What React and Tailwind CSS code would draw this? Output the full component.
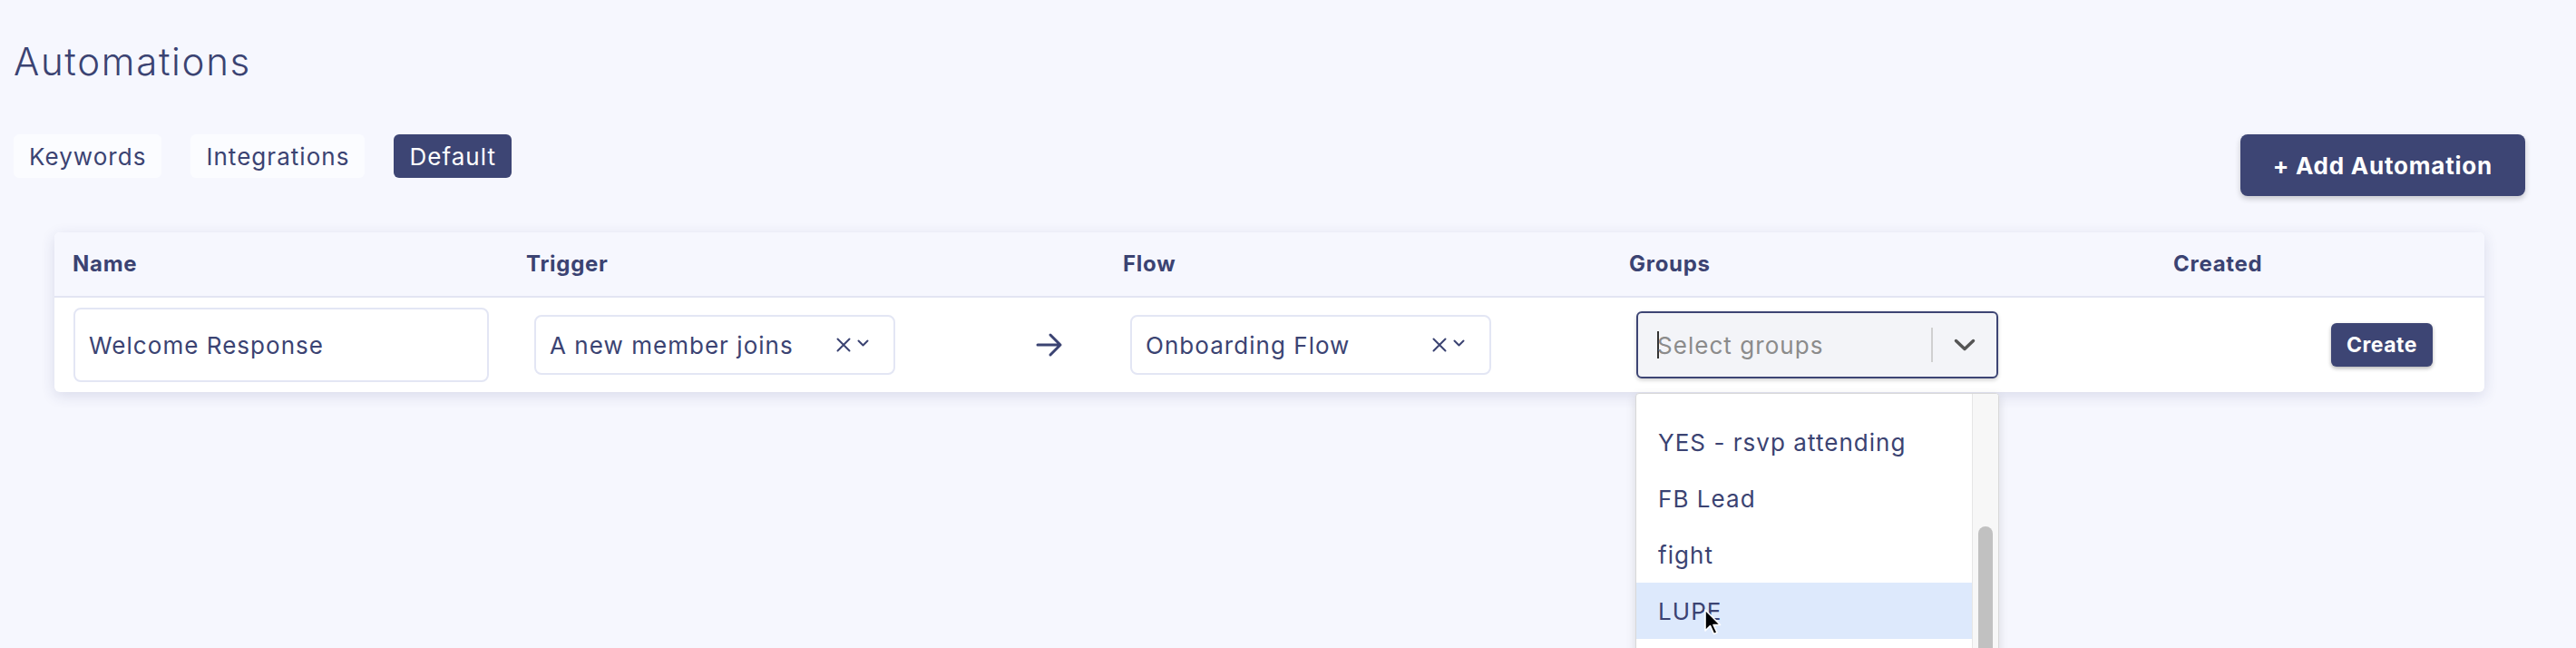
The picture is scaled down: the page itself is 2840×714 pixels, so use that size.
import React from 'react';

const navy = 'text-[#3b4372]';

const SmallX = () => (
  <svg width="16" height="16" viewBox="0 0 16 16" className="shrink-0">
    <path d="M1.5 1.5L14.5 14.5M14.5 1.5L1.5 14.5" stroke="#3b4372" strokeWidth="2" strokeLinecap="round" />
  </svg>
);

const SmallChevron = () => (
  <svg width="13" height="8" viewBox="0 0 13 8" className="shrink-0 ml-[7px] -mt-[4px]">
    <path d="M1.5 1.5L6.5 6.5L11.5 1.5" stroke="#3b4372" strokeWidth="2" fill="none" strokeLinecap="round" strokeLinejoin="round" />
  </svg>
);

const SelectBox = ({ value, className = '' }) => (
  <div className={`flex items-center w-[398px] h-[66px] border-2 border-[#e3e6f4] rounded-[8px] bg-white pl-[15px] pr-[27px] ${className}`}>
    <span className={`flex-1 text-[26px] tracking-[0.04em] ${navy}`}>{value}</span>
    <SmallX />
    <SmallChevron />
  </div>
);

const ArrowRight = () => (
  <svg width="30" height="28" viewBox="0 0 30 28" className="shrink-0">
    <path d="M2 14H27M16 3L27 14L16 25" stroke="#3b4372" strokeWidth="3" fill="none" strokeLinecap="round" strokeLinejoin="round" />
  </svg>
);

const groups = ['YES - rsvp attending', 'FB Lead', 'fight', 'LUPE'];

const GroupsSelect = () => (
  <div className="relative ml-[8px] w-[399px] h-[74px]">
    <div className="flex items-center h-full border-2 border-[#3d4574] rounded-[6px] bg-[#f3f4f8] pl-[21px] pr-[23px] shadow-[0_2px_4px_rgba(0,0,0,0.18)]">
      <span className="w-[2px] h-[30px] bg-[#333333] shrink-0" />
      <span className="flex-1 -ml-[2px] text-[26px] tracking-[0.04em] text-[#8b8b8b]">Select groups</span>
      <span className="w-[2px] h-[38px] bg-[#d0d0d0] mr-[23px]" />
      <svg width="24" height="14" viewBox="0 0 24 14">
        <path d="M2.5 2.5L12 11.5L21.5 2.5" stroke="#555555" strokeWidth="3.5" fill="none" strokeLinecap="round" strokeLinejoin="round" />
      </svg>
    </div>

    {/* open menu, scrolled down a little */}
    <div className="absolute left-[-1px] top-[90px] w-[401px] h-[290px] flex bg-white border border-[#d8d8d8] rounded-[4px] overflow-hidden shadow-[0_4px_12px_rgba(0,0,0,0.12)]">
      <div className="flex-1 flex flex-col">
        <div className="h-[22px] shrink-0" />
        {groups.map((g) => (
          <div
            key={g}
            className={`relative h-[62px] shrink-0 flex items-center pl-[24px] text-[26px] tracking-[0.04em] ${navy} ${g === 'LUPE' ? 'bg-[#dde9fc]' : ''}`}
          >
            {g}
            {g === 'LUPE' && (
              <svg width="22" height="32" viewBox="0 0 22 32" className="absolute left-[74px] top-[28px]">
                <path d="M2 2L2 25L7.5 19.5L11.5 28.5L15 27L11 18.5L18.5 18.5Z" fill="#000" stroke="#fff" strokeWidth="1.6" strokeLinejoin="round" />
              </svg>
            )}
          </div>
        ))}
        <div className="h-[62px] shrink-0" />
      </div>
      <div className="w-[29px] shrink-0 border-l border-[#e6e6e6] bg-[#f7f7f7] flex justify-center">
        <div className="mt-[146px] w-[16px] h-[220px] rounded-full bg-[#c1c1c1]" />
      </div>
    </div>
  </div>
);

const App = () => {
  const tabs = ['Keywords', 'Integrations', 'Default'];

  return (
    <div className="h-screen overflow-hidden bg-[#f6f7fe] font-['Inter',sans-serif] pl-[15px] pr-[56px] pt-[47px]">
      <h1 className={`text-[42px] leading-none font-light tracking-[0.04em] ${navy}`}>Automations</h1>

      <div className="flex justify-between items-start mt-[59px]">
        <div className="flex gap-[32px]">
          {tabs.map((t) => (
            <button
              key={t}
              className={`h-[48px] px-[17px] rounded-[6px] text-[26px] tracking-[0.04em] ${
                t === 'Default' ? 'bg-[#3d4574] text-white' : `bg-[#fbfcff] ${navy}`
              }`}
            >
              {t}
            </button>
          ))}
        </div>
        <button className="h-[68px] px-[36px] rounded-[8px] bg-[#3d4574] text-white text-[26px] font-bold tracking-[0.03em] shadow-[0_3px_6px_rgba(0,0,0,0.2)]">
          + Add Automation
        </button>
      </div>

      {/* table card */}
      <div className="mx-[45px] mt-[40px] bg-white rounded-[6px] shadow-[0_4px_16px_rgba(40,50,110,0.14)]">
        <div className={`flex items-center h-[72px] pl-[20px] bg-[#f6f7fe] rounded-t-[6px] border-b-2 border-[#e3e5f3] text-[24px] font-bold tracking-[0.03em] ${navy}`}>
          <div className="w-[500px]">Name</div>
          <div className="w-[658px]">Trigger</div>
          <div className="w-[558px]">Flow</div>
          <div className="w-[600px]">Groups</div>
          <div>Created</div>
        </div>

        <div className="flex items-center h-[104px] pl-[20px]">
          <div className="w-[500px]">
            <div className="ml-px w-[458px] h-[82px] flex items-center border-2 border-[#e3e6f4] rounded-[8px] pl-[15px]">
              <span className={`text-[26px] tracking-[0.04em] ${navy}`}>Welcome Response</span>
            </div>
          </div>
          <div className="w-[658px] flex items-center">
            <SelectBox value="A new member joins" className="ml-[9px]" />
            <div className="ml-[155px]">
              <ArrowRight />
            </div>
          </div>
          <div className="w-[558px]">
            <SelectBox value="Onboarding Flow" className="ml-[8px]" />
          </div>
          <div className="w-[600px]">
            <GroupsSelect />
          </div>
          <div>
            <button className="ml-[174px] w-[112px] h-[48px] rounded-[6px] bg-[#3d4574] text-white text-[23px] font-bold tracking-[0.02em] shadow-[0_2px_4px_rgba(0,0,0,0.3)]">
              Create
            </button>
          </div>
        </div>
      </div>
    </div>
  );
};

export default App;
